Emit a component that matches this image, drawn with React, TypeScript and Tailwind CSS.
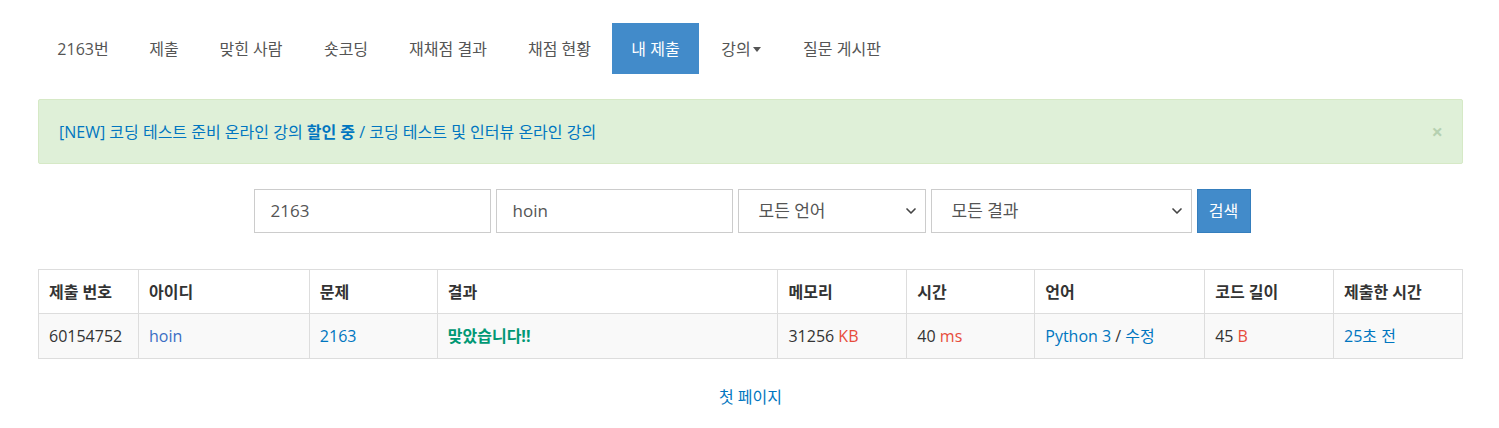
import { ChevronDown } from "lucide-react";

const font = "font-['Open_Sans','Noto_Sans_CJK_KR',sans-serif]";

const tabs = [
  { t: "2163번", w: "w-[92px]" },
  { t: "제출", w: "w-[70px]" },
  { t: "맞힌 사람", w: "w-[104px]" },
  { t: "숏코딩", w: "w-[86px]" },
  { t: "재채점 결과", w: "w-[118px]" },
  { t: "채점 현황", w: "w-[105px]" },
  { t: "내 제출", w: "w-[87px]" },
  { t: "강의", w: "w-[84px]" },
  { t: "질문 게시판", w: "w-[118px]" },
];

const cols = [
  { title: "제출 번호", w: "w-[100px]" },
  { title: "아이디", w: "w-[171px]" },
  { title: "문제", w: "w-[128px]" },
  { title: "결과", w: "w-[341px]" },
  { title: "메모리", w: "w-[129px]" },
  { title: "시간", w: "w-[128px]" },
  { title: "언어", w: "w-[170px]" },
  { title: "코드 길이", w: "w-[129px]" },
  { title: "제출한 시간", w: "w-[129px]" },
];

const cell = "border border-[#ddd] px-[10px]";

export default function App() {
  return (
    <div className={`${font} bg-white text-[16px] text-[#333] min-h-[428px] pl-[38px] pr-[36px] pt-[23px]`}>
      <ul className="flex h-[51px] -ml-px">
        {tabs.map(({ t, w }) => (
          <li
            key={t}
            className={
              t === "내 제출"
                ? `${w} flex items-center justify-center bg-[#428bca] text-white`
                : `${w} flex items-center justify-center text-[#555]`
            }
          >
            {t}
            {t === "강의" && (
              <span className="ml-[2px] mt-[2px] border-x-[4px] border-t-[5px] border-x-transparent border-t-[#555]" />
            )}
          </li>
        ))}
      </ul>

      <div className="mt-[25px] h-[65px] flex items-center justify-between border border-[#d6e9c6] bg-[#dff0d8] rounded-[2px] pl-5 pr-[19px]">
        <span className="text-[#0076c0]">
          [NEW] 코딩 테스트 준비 온라인 강의 <b className="font-bold">할인 중</b> / 코딩 테스트 및 인터뷰 온라인 강의
        </span>
        <span className="text-[#3c763d] opacity-25 font-bold text-[20px] leading-none">×</span>
      </div>

      <div className="mt-[25px] pl-[3px] flex justify-center gap-[5px] text-[17px] text-[#555]">
        <div className="w-[237px] h-[44px] border border-[#ccc] flex items-center px-4">2163</div>
        <div className="w-[237px] h-[44px] border border-[#ccc] flex items-center px-4">hoin</div>
        <div className="w-[188px] h-[44px] border border-[#ccc] flex items-center justify-between pl-5 pr-[6px]">
          모든 언어
          <ChevronDown size={16} strokeWidth={2.5} className="text-[#444]" />
        </div>
        <div className="w-[261px] h-[44px] border border-[#ccc] flex items-center justify-between pl-5 pr-[6px]">
          모든 결과
          <ChevronDown size={16} strokeWidth={2.5} className="text-[#444]" />
        </div>
        <div className="w-[54px] h-[44px] bg-[#428bca] border border-[#357ebd] flex items-center justify-center text-white text-[16px]">
          검색
        </div>
      </div>

      <table className="mt-[36px] w-full border-collapse">
        <thead>
          <tr className="h-[44px]">
            {cols.map((c) => (
              <th key={c.title} className={`${c.w} ${cell} text-left font-bold text-[#333]`}>
                {c.title}
              </th>
            ))}
          </tr>
        </thead>
        <tbody>
          <tr className="h-[45px] bg-[#f9f9f9]">
            <td className={cell}>60154752</td>
            <td className={`${cell} text-[#3b6ec4]`}>hoin</td>
            <td className={`${cell} text-[#0076c0]`}>2163</td>
            <td className={`${cell} text-[#009874] font-bold`}>맞았습니다!!</td>
            <td className={cell}>
              31256 <span className="text-[#e74c3c]">KB</span>
            </td>
            <td className={cell}>
              40 <span className="text-[#e74c3c]">ms</span>
            </td>
            <td className={`${cell} text-[#0076c0]`}>
              Python 3 <span className="text-[#333]">/</span> 수정
            </td>
            <td className={cell}>
              45 <span className="text-[#e74c3c]">B</span>
            </td>
            <td className={`${cell} text-[#0076c0]`}>25초 전</td>
          </tr>
        </tbody>
      </table>

      <div className="mt-[26px] text-center text-[#0076c0]">첫 페이지</div>
    </div>
  );
}
